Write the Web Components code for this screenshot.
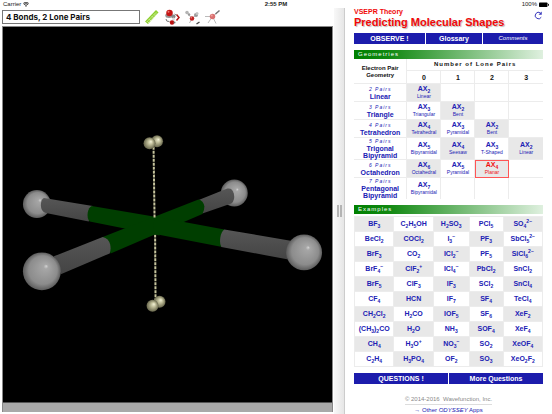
<!DOCTYPE html>
<html lang="en">
<head>
<meta charset="utf-8">
<meta name="viewport" content="width=device-width, initial-scale=1">
<title>Predicting Molecular Shapes</title>
<style>
  html, body { margin: 0; height: 100%; background: #fff; }
  body { font-family: "Liberation Sans", Arial, sans-serif; color: #111; --link: #2020b4; --bar: #1c1cac; --rule: #ececec; --shade: #e8e8e8; }
</style>
</head>
<body>
<odyssey-app></odyssey-app>
<script>
const define = (name, html, setup) => {
  const template = document.createElement('template');
  template.innerHTML = html;
  customElements.define(name, class extends HTMLElement {
    constructor() {
      super();
      this.attachShadow({ mode: 'open' }).append(template.content.cloneNode(true));
    }
    connectedCallback() { if (setup) setup(this, this.shadowRoot); }
  });
};

/* "SO4^2-" becomes SO, subscript 4, superscript 2- */
const formula = text => {
  const [base, charge] = text.split('^');
  return base.replace(/\d+/g, '<sub>$&</sub>') + (charge ? `<sup>${charge}</sup>` : '');
};

define('status-bar', `
<style>
  :host { display: grid; grid-template-columns: 1fr 1fr 1fr; align-items: center; height: 8px; padding: 0 3px; font: 6px/8px "Liberation Sans", Arial, sans-serif; color: #222; }
  span { display: flex; align-items: center; gap: 2px; }
  .time { justify-content: center; font-weight: bold; }
  .power { justify-content: flex-end; }
  svg { display: block; }
</style>
<span>Carrier <svg width="6" height="5" viewBox="0 0 12 10"><path d="M6 10 3.8 7.2a3.5 3.5 0 0 1 4.4 0zM2.6 5.8 1.3 4.2a7.6 7.6 0 0 1 9.4 0L9.4 5.800a5.500 5.500 0 0 0-6.800 0zM.8 3.500 0 2.500a9.800 9.800 0 0 1 12 0l-.8 1a8.500 8.500 0 0 0-10.400 0z" fill="#333"/></svg></span>
<span class="time">2:55 PM</span>
<span class="power">100% <svg width="10" height="5" viewBox="0 0 20 10"><rect x="0" y="1" width="17" height="9" rx="1.500" fill="#000"/><rect x="18" y="3.500" width="2" height="4" rx="1" fill="#000"/></svg></span>`);

define('tool-bar', `
<style>
  :host { display: flex; align-items: center; gap: 5px; height: 18px; box-sizing: border-box; }
  input { flex: 0 1 138px; min-width: 0; height: 14px; box-sizing: border-box; margin: 0; padding: 0 3px; border: 1px solid #777; border-radius: 0; background: #fff; color: #111; font: bold 8px/12px Inter, "Liberation Sans", sans-serif; }
  button { display: block; border: 0; padding: 0; background: none; height: 16px; width: 15px; }
  svg { display: block; width: 15px; height: 16px; }
</style>
<input type="text" value="4 Bonds, 2 Lone Pairs" aria-label="Model name">
<button aria-label="Measure"><svg viewBox="0 0 30 32">
  <path d="M0 25 22 2l5 5L6 30z" fill="#8ccf2c"/><path d="m4 25.500 19-19.500M6.500 27.500 25 8" stroke="#effbd8" stroke-width="1.800" stroke-dasharray="3 1.500"/></svg></button>
<button aria-label="Space filling"><svg viewBox="0 0 30 32">
  <ellipse cx="8" cy="13" rx="7.500" ry="5" fill="#969696"/><circle cx="9" cy="8" r="6.500" fill="#c61414"/><circle cx="7" cy="5.500" r="2" fill="#e87a72"/>
  <circle cx="17" cy="15" r="4" fill="#888"/><circle cx="17" cy="20" r="3" fill="#ddd"/><path d="M2 20q0 6 7 5" fill="none" stroke="#777" stroke-width="2"/>
  <circle cx="14" cy="27" r="4.500" fill="#bb1010"/><circle cx="19" cy="27" r="2" fill="#777"/><path d="m23 11 5 6-5 6" fill="none" stroke="#b61515" stroke-width="3"/><path d="m19 10 5 3" stroke="#888" stroke-width="2"/></svg></button>
<button aria-label="Ball and wire"><svg viewBox="0 0 30 32">
  <path d="m6 10 8 9 8-7m-8 7-5 9" fill="none" stroke="#aaa" stroke-width="1.700"/>
  <circle cx="4" cy="7" r="3.500" fill="#b4b4b4"/><circle cx="8" cy="11" r="2.500" fill="#999"/><circle cx="22" cy="12" r="4" fill="#999"/><circle cx="24" cy="9" r="3" fill="#c4c4c4"/>
  <circle cx="14" cy="19" r="4.500" fill="#c32020"/><circle cx="12.500" cy="17.500" r="1.500" fill="#e88b80"/><path d="m23 30 6-4" stroke="#444" stroke-width="2.500"/></svg></button>
<button aria-label="Tube"><svg viewBox="0 0 30 32">
  <path d="M0 15h15l-9 13m9-13 7 14m-7-14 11-9" fill="none" stroke="#bbb" stroke-width="2"/><path d="m21 10 8-7" stroke="#777" stroke-width="3"/>
  <circle cx="15" cy="15" r="5.500" fill="#d97070"/><circle cx="13.500" cy="13" r="2" fill="#eda5a0"/></svg></button>`);

define('molecule-view', `
<style>
  :host { display: flex; flex-direction: column; min-height: 0; border: solid #888; border-width: 1px 1px 0; background: #000; }
  svg { display: block; flex: 1; min-height: 0; width: 100%; }
  .foot { height: 10px; background: #a9a9a9; border-top: 1px solid #555; box-sizing: border-box; }
</style>
<svg viewBox="3 27 330 374" role="img" aria-label="Square planar molecule with four bonds and two lone pairs">
  <defs>
    <radialGradient id="atom" cx=".5" cy=".5" r=".5" fx=".62" fy=".36"><stop offset="0" stop-color="#d4d4d4"/><stop offset=".12" stop-color="#a6a6a6"/><stop offset=".75" stop-color="#8c8c8c"/><stop offset="1" stop-color="#5c5c5c"/></radialGradient>
    <radialGradient id="pair" cx=".5" cy=".5" r=".5" fx=".62" fy=".36"><stop offset="0" stop-color="#f4f3d8"/><stop offset=".4" stop-color="#bebc98"/><stop offset="1" stop-color="#66654b"/></radialGradient>
    <linearGradient id="tube" x2="0" y2="1"><stop offset="0" stop-color="#565656"/><stop offset="1" stop-color="#444"/></linearGradient>
  </defs>
  <path d="M155.500 222 156 300" stroke="#c5c39c" stroke-width="2" stroke-dasharray="3 1"/>
  <circle cx="37" cy="203.500" r="14" fill="url(#atom)"/>
  <path d="M44 197.500 93 205.500 89 221 46 212.500Q41 211 41 205 41 199 44 197.500z" fill="url(#tube)"/>
  <path d="M92 205.500 160 217v18L90 221Q87 218 88 212 89 207 92 205.500z" fill="#003e00"/>
  <circle cx="235" cy="192.500" r="13.500" fill="url(#atom)"/>
  <path d="M198 200 228 188Q233 187 234.500 193 236 200 232 203L203 213z" fill="url(#tube)"/>
  <path d="M103 236.500 199 199Q204 200 205 206 205 210 203 213.500L111 253z" fill="#003e00"/>
  <path d="M54 256 103 236.500Q109 238 110.500 244 111.500 249 110 253L61 274z" fill="url(#tube)"/>
  <path d="M155 216 225 229 223 246.500 153 233z" fill="#003e00"/>
  <path d="M225 229 293 240.500 288 259 222 246.500Q220 243 221 237 222 231 225 229z" fill="url(#tube)"/>
  <circle cx="42" cy="271" r="19" fill="url(#atom)"/>
  <circle cx="305" cy="252" r="18" fill="url(#atom)"/>
  <path d="M154 146 155 217" stroke="#c5c39c" stroke-width="2" stroke-dasharray="3 1"/>
  <g fill="url(#pair)"><circle cx="157.500" cy="140.500" r="6"/><circle cx="150" cy="142.500" r="6"/><circle cx="160" cy="301.500" r="6"/><circle cx="153" cy="305.500" r="6"/></g>
</svg>
<div class="foot"></div>`);

define('split-handle', `
<style>
  :host { display: flex; align-items: center; justify-content: center; background: linear-gradient(90deg, #f8f8f8, #e6e6e6); border-right: 1px solid #ccc; box-sizing: border-box; }
  i { width: 1px; height: 12px; border: solid #b4b4b4; border-width: 0 2px; }
</style><i></i>`);

define('button-row', `
<style>
  :host { display: flex; gap: 1px; }
  ::slotted(button) { height: 11px; border: 0; padding: 0; margin: 0; border-radius: 0; background: var(--bar); color: #fff; font: bold 7px/11px "Liberation Sans", Arial, sans-serif; white-space: nowrap; min-width: 0; }
</style><slot></slot>`);

define('section-title', `
<style>
  :host { display: block; background: linear-gradient(90deg, #008000, #108810 18%, #dff0df); }
  h2 { margin: 0; padding-left: 4px; font-size: 6px; line-height: 9px; font-weight: normal; letter-spacing: 1px; color: #fff; }
</style><h2><slot></slot></h2>`);

const tableStyle = `
  :host { display: block; }
  table { width: 100%; table-layout: fixed; border-collapse: collapse; }
  th, td { padding: 0; text-align: center; vertical-align: middle; border: 1px solid var(--rule); }
  a { color: var(--link); text-decoration: none; font-weight: bold; font-size: 7px; line-height: 8px; display: block; }
  sub, sup { font-size: 5px; line-height: 0; }
  sub { vertical-align: -2px; } sup { vertical-align: 3px; }
  .on { background: var(--shade); }`;

const geometries = [
  ['2', 'Linear', 18, ['AX2', 'Linear', 1]],
  ['3', 'Triangle', 18, ['AX3', 'Triangular', 0], ['AX2', 'Bent', 1]],
  ['4', 'Tetrahedron', 18, ['AX4', 'Tetrahedral', 1], ['AX3', 'Pyramidal', 0], ['AX2', 'Bent', 1]],
  ['5', 'Trigonal<br>Bipyramid', 21, ['AX5', 'Bipyramidal', 0], ['AX4', 'Seesaw', 1], ['AX3', 'T-Shaped', 0], ['AX2', 'Linear', 1]],
  ['6', 'Octahedron', 18, ['AX6', 'Octahedral', 1], ['AX5', 'Pyramidal', 0], ['AX4', 'Planar', 2]],
  ['7', 'Pentagonal<br>Bipyramid', 21, ['AX7', 'Bipyramidal', 0]]
];

define('geometry-table', `
<style>${tableStyle}
  table { border-style: hidden; }
  col.name { width: 28%; }
  thead th { font-size: 6px; line-height: 7px; color: #111; height: 12px; }
  thead th[rowspan] { padding-top: 2px; }
  thead .wide { letter-spacing: 1px; height: 11px; }
  thead .num { font-size: 7px; }
  em { display: block; font-weight: normal; font-size: 5px; letter-spacing: 1px; }
  tbody th a, em { line-height: 7px; }
  small { display: block; font-weight: normal; font-size: 5px; line-height: 7px; }
  .now { background: var(--shade); outline: 1px solid #f55; outline-offset: -1px; }
  .now a { color: #f01010; }
</style>
<table><colgroup><col class="name"><col><col><col><col></colgroup>
<thead><tr><th rowspan="2" scope="col">Electron Pair<br>Geometry</th><th class="wide" colspan="4" scope="colgroup">Number of Lone Pairs</th></tr>
<tr><th class="num" scope="col">0</th><th class="num" scope="col">1</th><th class="num" scope="col">2</th><th class="num" scope="col">3</th></tr></thead>
<tbody></tbody></table>`, (host, root) => {
  root.querySelector('tbody').innerHTML = geometries.map(([n, name, h, ...cells]) =>
    `<tr style="height:${h}px"><th scope="row"><a href="#g${n}"><em>${n} Pairs</em>${name}</a></th>` +
    [0, 1, 2, 3].map(i => cells[i]
      ? `<td class="${['', 'on', 'now'][cells[i][2]]}"><a href="#g${n}-${i}">${formula(cells[i][0])}<small>${cells[i][1]}</small></a></td>`
      : '<td></td>').join('') + '</tr>').join('');
});

const examples = `BF3 C2H5OH H2SO3 PCl5 SO4^2−
BeCl2 COCl2 I3^− PF3 SbCl5^2−
BrF3 CO2 ICl2^− PF5 SiCl6^2−
BrF4^− ClF2^+ ICl4^− PbCl2 SnCl2
BrF5 ClF3 IF3 SCl2 SnCl4
CF4 HCN IF7 SF4 TeCl4
CH2Cl2 H2CO IOF5 SF6 XeF2
(CH3)2CO H2O NH3 SOF4 XeF4
CH4 H3O^+ NO3^− SO2 XeOF4
C2H4 H3PO4 OF2 SO3 XeO2F2`.split('\n').map(row => row.split(' '));

define('example-table', `
<style>${tableStyle}
  td { height: 14px; }
  .c0, .c1, .c4 { width: 21%; }
  .c2 { width: 19%; } .c3 { width: 18%; }
</style><table><tbody></tbody></table>`, (host, root) => {
  root.querySelector('tbody').innerHTML = examples.map((row, r) => '<tr>' + row.map((f, c) =>
    `<td class="c${c}${(r + c) % 2 ? '' : ' on'}"><a href="#x${r}-${c}">${formula(f)}</a></td>`).join('') + '</tr>').join('');
});

define('page-heading', `
<style>
  :host { display: flex; justify-content: space-between; align-items: flex-start; color: #f00808; }
  p, h1 { margin: 0; font-weight: bold; white-space: nowrap; }
  p { font-size: 7px; line-height: 8px; }
  h1 { font-size: 11px; line-height: 13px; text-shadow: 1px 1px 1px #bbb; }
  button { border: 0; padding: 0; margin: 3px 0 0; background: none; width: 9px; height: 9px; }
  svg { display: block; }
</style>
<div><p>VSEPR Theory</p><h1>Predicting Molecular Shapes</h1></div>
<button aria-label="Reload"><svg width="9" height="9" viewBox="0 0 18 18"><path d="M14.500 12.500A6.500 6.500 0 1 1 13 4" fill="none" stroke="#3838bd" stroke-width="2"/><path d="M15.500 1v6.500H9z" fill="#3838bd"/></svg></button>`);

define('lesson-panel', `
<style>
  :host { display: block; padding: 0 9px; }
  .top { margin-top: 4px; }
  section-title { margin-top: 6px; }
  example-table { margin-top: 2px; }
  .bottom { margin-top: 6px; }
  .a { flex: 71; } .b { flex: 56; } .c { flex: 60; } .half { flex: 1; }
  .c.c { font-weight: normal; font-style: italic; font-size: 6px; }
  footer { margin-top: 10px; display: flex; flex-direction: column; align-items: center; font-size: 6px; line-height: 10px; color: #888; }
  .copy { border-bottom: 1px solid #ddd; }
  a { color: var(--link); text-decoration: none; }
</style>
<page-heading></page-heading>
<button-row class="top"><button class="a">OBSERVE !</button><button class="b">Glossary</button><button class="c">Comments</button></button-row>
<section-title>Geometries</section-title>
<geometry-table></geometry-table>
<section-title>Examples</section-title>
<example-table></example-table>
<button-row class="bottom"><button class="half">QUESTIONS !</button><button class="half">More Questions</button></button-row>
<footer><div class="copy">© 2014-2016 &nbsp;Wavefunction, Inc.</div><a href="#apps">→ Other <i>ODYSSEY</i> Apps</a></footer>`);

define('odyssey-app', `
<style>
  :host { display: grid; grid-template: 8px minmax(0, 1fr) / minmax(0, 334fr) 11px minmax(0, 207fr); height: 100vh; overflow: hidden; }
  status-bar { grid-column: 1 / -1; }
  main { display: flex; flex-direction: column; min-height: 0; padding: 0 1px 2px 2px; }
  molecule-view { flex: 1; }
</style>
<status-bar></status-bar>
<main><tool-bar></tool-bar><molecule-view></molecule-view></main>
<split-handle></split-handle>
<lesson-panel></lesson-panel>`);
</script>
</body>
</html>
